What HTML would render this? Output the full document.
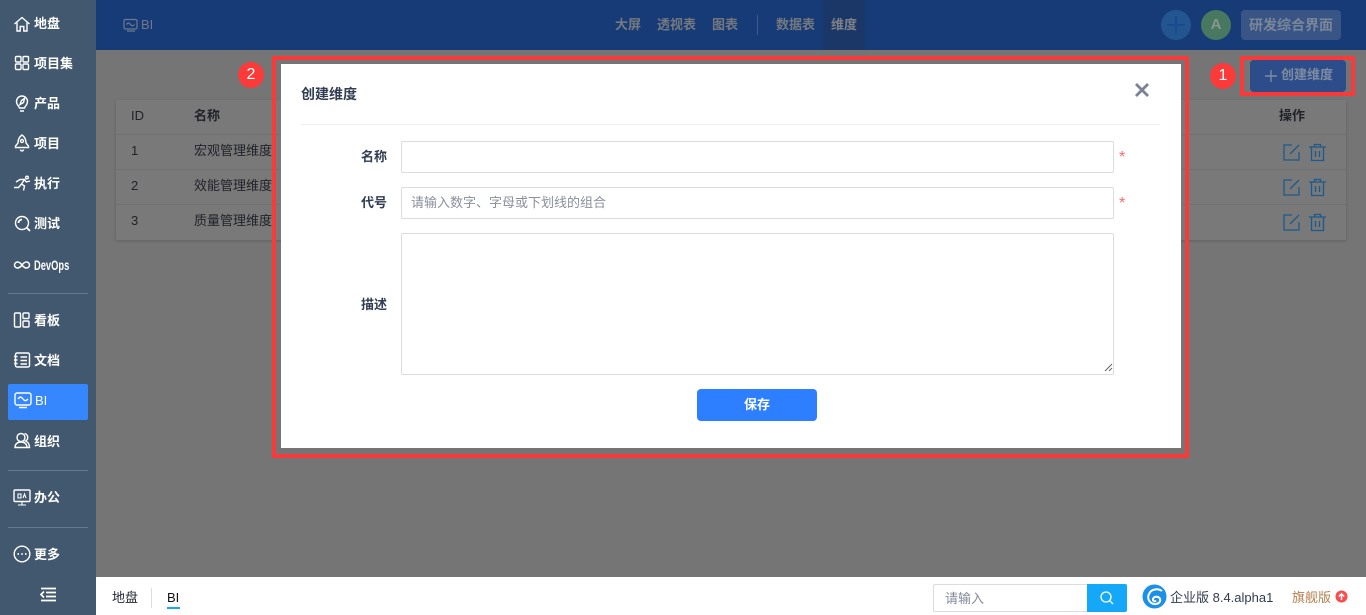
<!DOCTYPE html>
<html lang="zh">
<head>
<meta charset="utf-8">
<title>BI</title>
<style>
html,body{margin:0;padding:0;width:1366px;height:615px;overflow:hidden;background:#757575}
*{box-sizing:border-box}
body{font-family:"Liberation Sans","Noto Sans CJK SC",sans-serif;font-size:13px;color:#313c52;position:relative}
.a{position:absolute;white-space:nowrap}
#side{position:absolute;left:0;top:0;width:96px;height:615px;background:#42586f}
.n{position:absolute;left:34px;color:#fff;font-size:13px;font-weight:700;line-height:16px;white-space:nowrap;margin-top:1px}
.i{position:absolute;left:12px;width:20px;height:20px;fill:none;stroke:#fff;stroke-width:1.4}
.hr{position:absolute;left:8px;width:80px;height:1px;background:#64788f}
#head{position:absolute;left:96px;top:0;width:1270px;height:50px;background:#173b76}
.t{position:absolute;top:16px;font-size:13px;line-height:18px;font-weight:700;color:#75797f;white-space:nowrap}
#tbl{position:absolute;left:116px;top:100px;width:1230px;height:140px;background:#797979;box-shadow:0 1px 3px rgba(0,0,0,.18)}
.l{position:absolute;left:0;width:1230px;height:1px;background:#707070}
.c{position:absolute;font-size:13px;line-height:16px;color:#212329;white-space:nowrap}
#modal{position:absolute;left:281px;top:64px;width:900px;height:384px;background:#fff}
.lb{position:absolute;font-size:13px;font-weight:700;line-height:16px;color:#313c52;white-space:nowrap}
.ip{position:absolute;left:120px;width:713px;background:#fff;border:1px solid #dcdcdc;border-radius:2px}
.st{position:absolute;left:838px;color:#fb6a6a;font-size:16px;line-height:16px}
.rb{position:absolute;border:4px solid #f93a3a}
.bd{position:absolute;width:26px;height:26px;border-radius:50%;background:#fb3a3a;color:#fff;font-size:16px;line-height:26px;text-align:center}
#foot{position:absolute;left:96px;top:577px;width:1270px;height:38px;background:#fff}
</style>
</head>
<body>

<div id="head">
  <svg class="a" style="left:27px;top:18px" width="16" height="15" viewBox="0 0 16 15" fill="none" stroke="#6d7a8e" stroke-width="1.2"><rect x="1" y="1.5" width="13" height="9.5" rx="1.5"/><path d="M3.500 6.500c1.500-2 2.500-2 4 0s2.500 1.500 4 0M4 13h8"/></svg>
  <div class="a" style="left:45px;top:16px;font-size:13px;line-height:18px;color:#70798a">BI</div>
  <div class="t" style="left:519px">大屏</div>
  <div class="t" style="left:561px">透视表</div>
  <div class="t" style="left:616px">图表</div>
  <div class="a" style="left:661px;top:15px;width:1px;height:20px;background:#3f5a88"></div>
  <div class="t" style="left:680px">数据表</div>
  <div class="a" style="left:727px;top:0;width:42px;height:50px;background:#1a3768"></div>
  <div class="t" style="left:735px;color:#7f8186">维度</div>
  <div class="a" style="left:1065px;top:10px;width:30px;height:30px;border-radius:50%;background:#235690"></div>
  <svg class="a" style="left:1070px;top:15px" width="20" height="20" viewBox="0 0 20 20" stroke="#1b4a8c" stroke-width="2"><path d="M10 1v18M1 10h18"/></svg>
  <div class="a" style="left:1105px;top:10px;width:30px;height:30px;border-radius:50%;background:#487860;color:#8a9590;font-size:15px;font-weight:700;line-height:30px;text-align:center">A</div>
  <div class="a" style="left:1145px;top:10px;width:100px;height:30px;border-radius:4px;background:#385586;color:#7b8698;font-size:14px;font-weight:700;line-height:30px;text-align:center">研发综合界面</div>
</div>

<div id="tbl">
  <div class="l" style="top:34px"></div>
  <div class="l" style="top:69px"></div>
  <div class="l" style="top:104px"></div>
  <div class="c" style="left:15px;top:8px">ID</div>
  <div class="c" style="left:78px;top:8px;font-weight:700">名称</div>
  <div class="c" style="left:1163px;top:8px;font-weight:700">操作</div>
  <div class="c" style="left:15px;top:43px">1</div>
  <div class="c" style="left:78px;top:43px">宏观管理维度</div>
  <div class="c" style="left:15px;top:78px">2</div>
  <div class="c" style="left:78px;top:78px">效能管理维度</div>
  <div class="c" style="left:15px;top:113px">3</div>
  <div class="c" style="left:78px;top:113px">质量管理维度</div>
  <svg class="a" style="left:1166px;top:43px" width="20" height="120" viewBox="0 0 20 120" fill="none" stroke="#1c5a8c" stroke-width="1.300">
    <path d="M10 2H2v15h15V9M8 11l9-9"/><path d="M10 37H2v15h15V44M8 46l9-9"/><path d="M10 72H2v15h15V79M8 81l9-9"/>
  </svg>
  <svg class="a" style="left:1192px;top:43px" width="20" height="120" viewBox="0 0 20 120" fill="none" stroke="#1c5a8c" stroke-width="1.300">
    <path d="M1 4h17M6.500 4V1.500h6V4M3.500 4v13.500h12V4M7.500 8v6M11.500 8v6"/><path d="M1 39h17M6.500 39v-2.500h6V39M3.500 39v13.500h12V39M7.500 43v6M11.500 43v6"/><path d="M1 74h17M6.500 74v-2.500h6V74M3.500 74v13.500h12V74M7.500 78v6M11.500 78v6"/>
  </svg>
</div>

<div class="a" style="left:1250px;top:60px;width:96px;height:32px;border-radius:4px;background:#2c4c8a"></div>
<svg class="a" style="left:1265px;top:70px" width="12" height="12" viewBox="0 0 12 12" stroke="#7f8ba0" stroke-width="1.400"><path d="M6 0v12M0 6h12"/></svg>
<div class="a" style="left:1281px;top:67px;color:#7f8ba0;font-size:13px;font-weight:700;line-height:16px">创建维度</div>

<div class="rb" style="left:272px;top:56px;width:917px;height:402px"></div>
<div class="rb" style="left:1240px;top:56px;width:115px;height:40px"></div>
<div class="bd" style="left:238px;top:62px">2</div>
<div class="bd" style="left:1210px;top:63px">1</div>

<div id="modal">
  <div class="a" style="left:20px;top:22px;font-size:14px;font-weight:700;line-height:16px;color:#313c52">创建维度</div>
  <svg class="a" style="left:853px;top:18px" width="16" height="16" viewBox="0 0 16 16" stroke="#7b8296" stroke-width="2.800"><path d="M2 2l12 12M14 2L2 14"/></svg>
  <div class="a" style="left:20px;top:60px;width:859px;height:1px;background:#eee"></div>
  <div class="lb" style="left:80px;top:85px">名称</div>
  <div class="ip" style="top:77px;height:32px"></div>
  <div class="st" style="top:86px">*</div>
  <div class="lb" style="left:80px;top:131px">代号</div>
  <div class="ip" style="top:123px;height:32px;padding-left:9px;font-size:13px;line-height:30px;color:#8a8f9c">请输入数字、字母或下划线的组合</div>
  <div class="st" style="top:132px">*</div>
  <div class="lb" style="left:80px;top:233px">描述</div>
  <div class="ip" style="top:169px;height:142px"></div>
  <svg class="a" style="left:823px;top:299px" width="9" height="9" viewBox="0 0 9 9" stroke="#666" stroke-width="1"><path d="M1 8l7-7M5 8l3-3"/></svg>
  <div class="a" style="left:416px;top:325px;width:120px;height:32px;border-radius:4px;background:#2e7fff;color:#fff;font-size:13px;font-weight:700;line-height:32px;text-align:center">保存</div>
</div>

<div id="side">
  <svg class="i" style="top:14px" viewBox="0 0 20 20"><path d="M2.500 10L10 3.500 17.500 10M5 8.500v8.500h3.200v-4.500h3.600v4.500H15V8.500"/></svg>
  <div class="n" style="top:15px">地盘</div>
  <svg class="i" style="top:53px" viewBox="0 0 20 20"><rect x="3.500" y="3.500" width="5.500" height="5.500" rx="1"/><rect x="11" y="3.500" width="5.500" height="5.500" rx="1"/><rect x="3.500" y="11" width="5.500" height="5.500" rx="1"/><rect x="11" y="11" width="5.500" height="5.500" rx="1"/></svg>
  <div class="n" style="top:55px">项目集</div>
  <svg class="i" style="top:93px" viewBox="0 0 20 20"><path d="M7.500 15c-.5-2-3-3-3-6.500a5.500 5.500 0 0 1 11 0c0 3.500-2.500 4.500-3 6.500zM8 18h4M8 11.500l1.500-4 3-2-1 4z"/></svg>
  <div class="n" style="top:95px">产品</div>
  <svg class="i" style="top:133px" viewBox="0 0 20 20"><path d="M10 2c-3 2-4 5-4 8l-2.500 3v1.500h13V13L14 10c0-3-1-6-4-8zM8.500 16.500a1.500 1.500 0 0 0 3 0"/><circle cx="10" cy="8" r="1.500"/></svg>
  <div class="n" style="top:135px">项目</div>
  <svg class="i" style="top:173px" viewBox="0 0 20 20"><circle cx="15" cy="4.500" r="1.300"/><path d="M4 9l4-2.500h4.500L9.500 11l3 2-1 4.500M9.500 11l-3 3.500H2M12.500 7l2 2 3.500-1"/></svg>
  <div class="n" style="top:175px">执行</div>
  <svg class="i" style="top:213px" viewBox="0 0 20 20"><circle cx="10" cy="10" r="6.500"/><path d="M14.500 14.500l3.500 3.500M6.500 10a3.500 3.500 0 0 1 3.500-3.500" stroke-width="1.800"/></svg>
  <div class="n" style="top:215px">测试</div>
  <svg class="i" style="top:255px;stroke-width:1.500" viewBox="0 0 20 20"><path d="M10 10c-1.800-2.500-3-3-4.500-3a3 3 0 0 0 0 6c1.500 0 2.700-.5 4.500-3s3-3 4.500-3a3 3 0 0 1 0 6c-1.500 0-2.700-.5-4.500-3z"/></svg>
  <div class="n" style="top:256px;font-size:14px;transform:scaleX(.667);transform-origin:0 0">DevOps</div>
  <div class="hr" style="top:293px"></div>
  <svg class="i" style="top:310px" viewBox="0 0 20 20"><rect x="2.500" y="3" width="6" height="14" rx="1"/><rect x="11" y="3" width="6" height="5.500" rx="1"/><rect x="11" y="11" width="6" height="6" rx="1"/></svg>
  <div class="n" style="top:312px">看板</div>
  <svg class="i" style="top:350px" viewBox="0 0 20 20"><rect x="3.500" y="3" width="14" height="14" rx="1.500"/><path d="M2 6.500h3.500M2 10h3.500M2 13.500h3.500M8.500 7h6.500M8.500 10.500h6.500M8.500 14h6.500"/></svg>
  <div class="n" style="top:352px">文档</div>
  <div class="a" style="left:8px;top:384px;width:80px;height:36px;border-radius:2px;background:#3686fd"></div>
  <svg class="i" style="top:390px;left:13px" viewBox="0 0 20 20"><rect x="2" y="3" width="16" height="12" rx="2"/><path d="M5 9c2-2.500 3-2.500 5 0s3 2 5 0M6 17.500h8"/></svg>
  <div class="n" style="top:392px;left:35px;font-weight:400">BI</div>
  <svg class="i" style="top:430px" viewBox="0 0 20 20"><circle cx="9" cy="7.500" r="4"/><path d="M3 17.500c0-3.500 2.500-5.500 6-5.500s6 2 6 5.500zM12.500 3.500a4 4 0 0 1 1 7.500c2.500 1 4 3 4 6.500h-2.500"/></svg>
  <div class="n" style="top:433px">组织</div>
  <div class="hr" style="top:470px"></div>
  <svg class="i" style="top:487px" viewBox="0 0 20 20"><rect x="2" y="3" width="16" height="11.500" rx="1"/><path d="M10 14.500v3M6 18h8M6 7h3v4H6zM11 11l1.500-4 1.500 4" stroke-width="1.100"/></svg>
  <div class="n" style="top:489px">办公</div>
  <div class="hr" style="top:527px"></div>
  <svg class="i" style="top:544px" viewBox="0 0 20 20"><circle cx="10" cy="10" r="7.800"/><path d="M5.500 10h1.500M9.300 10h1.500M13 10h1.500" stroke-width="1.800"/></svg>
  <div class="n" style="top:546px">更多</div>
  <svg class="a" style="left:40px;top:587px" width="16" height="15" viewBox="0 0 16 15" fill="none" stroke="#fff" stroke-width="1.700"><path d="M1 1.500h15M6 5.500h10M6 9.500h10M1 13.500h15M4 4.500L1 7.500l3 3"/></svg>
</div>

<div id="foot">
  <div class="a" style="left:16px;top:12px;font-size:13px;line-height:18px;color:#1e2530">地盘</div>
  <div class="a" style="left:55px;top:11px;width:1px;height:20px;background:#dcdcdc"></div>
  <div class="a" style="left:71px;top:12px;font-size:13px;line-height:18px;color:#111">BI</div>
  <div class="a" style="left:71px;top:30px;width:13px;height:2px;background:#16a8f8"></div>
  <div class="a" style="left:837px;top:7px;width:155px;height:28px;border:1px solid #dcdcdc;border-radius:2px 0 0 2px;padding-left:11px;font-size:13px;line-height:28px;color:#838a9d">请输入</div>
  <div class="a" style="left:991px;top:7px;width:40px;height:28px;background:#16a8f8;border-radius:0 2px 2px 0"></div>
  <svg class="a" style="left:1003px;top:13px" width="16" height="16" viewBox="0 0 16 16" fill="none" stroke="#fff" stroke-width="1.300"><circle cx="7" cy="7" r="5"/><path d="M10.500 10.500L14 14"/></svg>
  <svg class="a" style="left:1046px;top:7px" width="25" height="25" viewBox="0 0 25 25" fill="none"><circle cx="12.500" cy="12.500" r="12" fill="#1c8fe6"/><path d="M20 7c-4-3-11-2-13 3-2 4 0 9 5 10 4 .5 7-2 6-5-1-3-6-3-7 0-.5 2 2 3 3 1.500" stroke="#fff" stroke-width="2"/></svg>
  <div class="a" style="left:1074px;top:12px;font-size:13px;line-height:18px;color:#313c52">企业版 8.4.alpha1</div>
  <div class="a" style="left:1196px;top:12px;font-size:13px;line-height:18px;color:#b57f4e">旗舰版</div>
  <svg class="a" style="left:1239px;top:13px" width="13" height="13" viewBox="0 0 13 13" fill="none"><circle cx="6.500" cy="6.500" r="6" fill="#fb4b4b"/><path d="M6.500 10V4M3.800 6.500l2.700-2.700 2.700 2.700" stroke="#fff" stroke-width="1.500"/></svg>
</div>

</body>
</html>
